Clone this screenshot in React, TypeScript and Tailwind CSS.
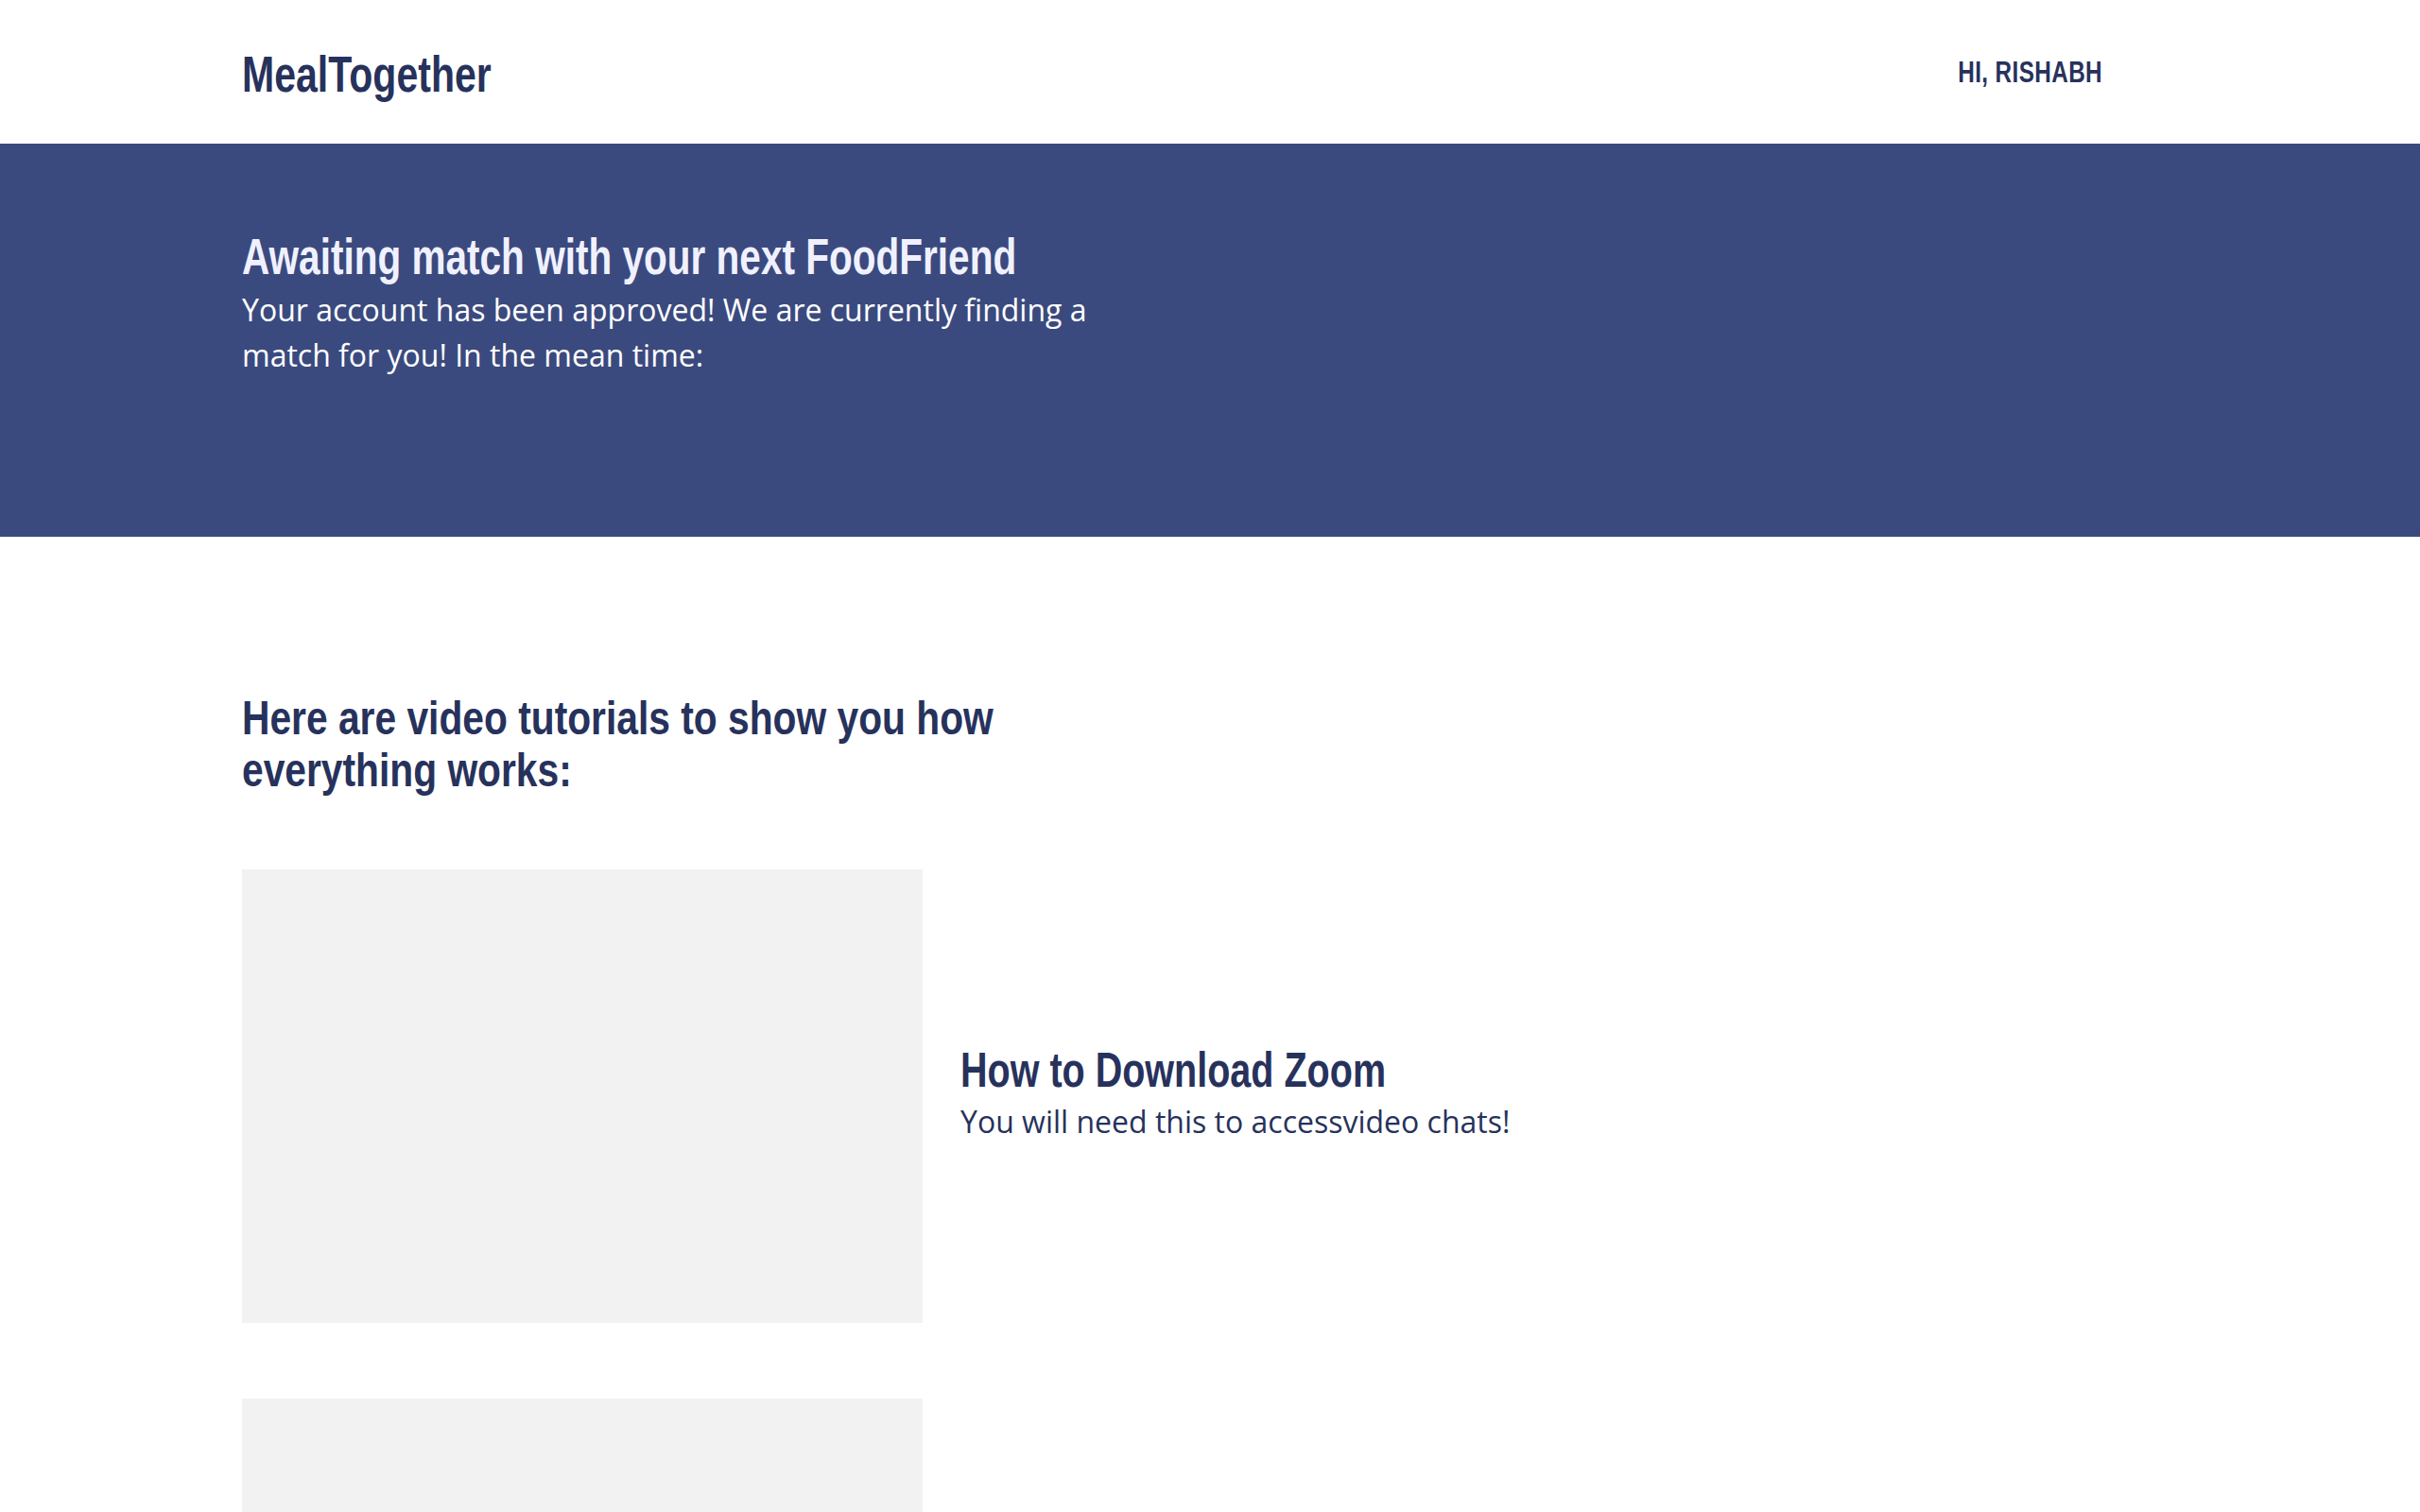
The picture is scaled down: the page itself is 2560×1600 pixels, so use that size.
// condensed display face: Liberation Sans Bold squeezed horizontally
const display = "font-['Liberation_Sans',Arial,sans-serif] font-bold";

const tutorials = [
  { title: "How to Download Zoom", text: "You will need this to accessvideo chats!" },
  { title: "", text: "" },
];

const App = () => {
  return (
    <div className="min-h-screen bg-white font-['Open_Sans',sans-serif] text-[#27325c]">
      <header className="h-[152px] flex items-center justify-between pl-[256px] pr-[336px]">
        <h1 className={`${display} mt-[4px] text-[54px] leading-none origin-left scale-x-[0.76]`}>MealTogether</h1>
        <nav className={`${display} text-[32px] leading-none uppercase tracking-[0.5px] origin-right scale-x-[0.76]`}>
          Hi, Rishabh
        </nav>
      </header>

      <section className="bg-[#3b4a7e] pl-[256px] pt-[88px] pb-[168px]">
        <div className="w-[930px]">
          <h2
            className={`${display} w-[1216px] whitespace-nowrap text-[53px] leading-[1.2] text-[#f0f1ff] origin-left scale-x-[0.765]`}
          >
            Awaiting match with your next FoodFriend
          </h2>
          <p className="text-[32px] leading-[48px] text-white">
            Your account has been approved! We are currently finding a match for you! In the mean time:
          </p>
        </div>
      </section>

      <main className="pl-[256px] pt-[165px] pb-20">
        <h2 className={`${display} w-[1148px] text-[50px] leading-[55px] origin-left scale-x-[0.815]`}>
          Here are video tutorials to show you how everything works:
        </h2>

        <div className="mt-[77px] flex flex-col gap-20">
          {tutorials.map((t, i) => (
            <div key={i} className="flex items-center gap-10">
              <div className="w-[720px] h-[480px] bg-[#f2f2f2] shrink-0" />
              {t.title && (
                <div className="mb-[7px]">
                  <h3 className={`${display} whitespace-nowrap text-[52px] leading-[1.2] origin-left scale-x-[0.76]`}>
                    {t.title}
                  </h3>
                  <p className="text-[32px] leading-[48px]">{t.text}</p>
                </div>
              )}
            </div>
          ))}
        </div>
      </main>
    </div>
  );
};

export default App;
